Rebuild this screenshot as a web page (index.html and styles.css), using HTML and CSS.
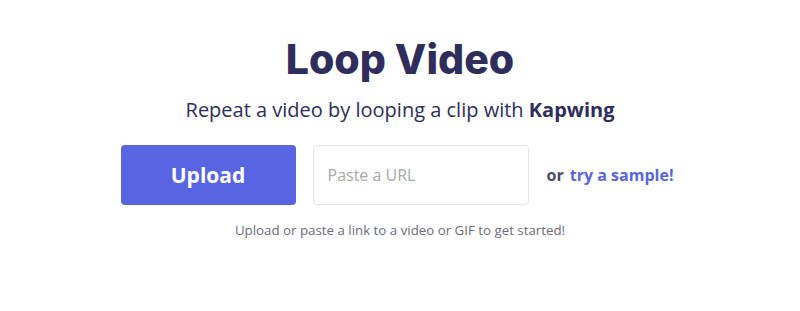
FILE: index.html
```html
<!DOCTYPE html>
<html lang="en">
<head>
    <meta charset="UTF-8">
    <title>Loop Video</title>
    <link rel="stylesheet" href="styles.css">
</head>
<body>
    <div class="hero">
        <h1>Loop Video</h1>
        <p class="subtitle">Repeat a video by looping a clip with <strong>Kapwing</strong></p>

        <div class="upload-row">
            <button class="upload-btn">Upload</button>
            <input class="url-input" type="text" placeholder="Paste a URL">
            <div class="sample">or <a href="#">try a sample!</a></div>
        </div>

        <p class="hint">Upload or paste a link to a video or GIF to get started!</p>
    </div>
</body>
</html>
```

FILE: styles.css
```css
body {
    margin: 0;
    font-family: "Open Sans", Arial, sans-serif;
    background-color: #fff;
    color: #2e2d5c;
}

.hero {
    display: flex;
    flex-direction: column;
    align-items: center;
    padding-top: 31px;
}

h1 {
    margin: 0;
    font-family: Inter, sans-serif;
    font-size: 41px;
    font-weight: 800;
    line-height: 56px;
    color: #2e2d5c;
}

.subtitle {
    margin: 9px 0 0;
    font-size: 20px;
    line-height: 28px;
    color: #2e2d5c;
}

.subtitle strong {
    font-weight: 700;
}

.upload-row {
    display: flex;
    align-items: center;
    margin-top: 21px;
    margin-left: -6px;
}

.upload-btn {
    width: 175px;
    height: 60px;
    border: none;
    border-radius: 4px;
    background-color: #5865e0;
    color: #fff;
    font-family: "Open Sans", sans-serif;
    font-size: 21px;
    font-weight: 700;
    cursor: pointer;
}

.url-input {
    box-sizing: border-box;
    width: 216px;
    height: 60px;
    margin-left: 17px;
    padding: 0 14px;
    border: 1px solid #e4e4e4;
    border-radius: 4px;
    font-family: "Open Sans", sans-serif;
    font-size: 16px;
}

.url-input::placeholder {
    color: #a8a8a8;
}

.sample {
    margin-left: 18px;
    font-size: 16px;
    font-weight: 700;
    color: #4b4a6b;
}

.sample a {
    margin-left: 2px;
    color: #5865e0;
    text-decoration: none;
}

.hint {
    margin: 16px 0 0;
    font-size: 13.3px;
    color: #6b6b7b;
}
```
